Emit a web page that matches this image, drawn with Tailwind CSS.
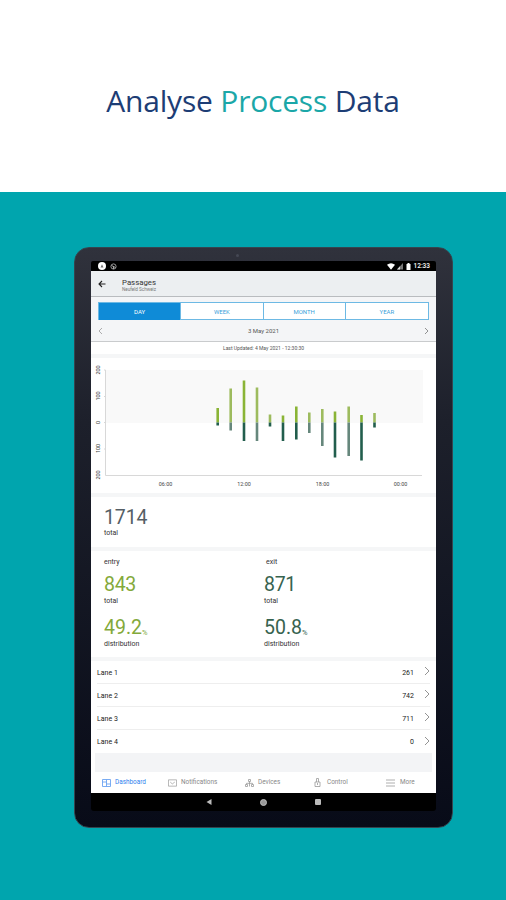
<!DOCTYPE html>
<html lang="en">
    <head>
        <meta charset="UTF-8" />
        <meta name="viewport" content="width=device-width, initial-scale=1.0" />
        <title>Analyse Process Data</title>
        <script src="https://cdn.jsdelivr.net/npm/@tailwindcss/browser@4"></script>
    </head>
    <body class="font-['Roboto',sans-serif]">
        <div class="w-[506px] h-[900px] overflow-hidden flex flex-col bg-white">
            <div class="h-[192px] shrink-0 pt-[80px] text-center">
                <h1
                    class="font-['Open_Sans',sans-serif] text-[30px] leading-[42px] tracking-[-0.2px] whitespace-nowrap text-[#1d3d75]"
                >
                    Analyse <span class="text-[#1ba7a8]">Process</span> Data
                </h1>
            </div>

            <div class="flex-1 bg-[#00a5ae] pt-[55px] pl-[74px]">
                <!-- Tablet -->
                <div
                    class="w-[379px] h-[581px] rounded-[15px] border border-[#35454f] bg-linear-to-b from-[#30323c] via-[#1d202b] via-30% to-[#080b18] px-[16px] pt-[3px]"
                >
                    <div class="flex justify-center h-[10px] pt-[3px] pr-[53px]">
                        <div class="w-[3px] h-[3px] rounded-full bg-[#454854]"></div>
                    </div>

                    <!-- Status bar -->
                    <div
                        class="h-[10px] bg-black rounded-t-[2px] flex items-center justify-between pl-[7px] pr-[6px]"
                    >
                        <div class="flex items-center gap-[4px]">
                            <svg width="8" height="8" viewBox="0 0 8 8">
                                <circle cx="4" cy="4" r="4" fill="#fff" />
                                <path d="M4 2.3 5.5 5.4H2.5Z" fill="#777" />
                            </svg>
                            <svg width="7" height="7" viewBox="0 0 7 7">
                                <circle cx="3.5" cy="3.5" r="2.6" fill="none" stroke="#999" />
                                <path d="M1.5 2.5 5.5 4.5M3.5 3.5V6" stroke="#aaa" />
                            </svg>
                        </div>
                        <div class="flex items-center gap-[2px]">
                            <svg width="8" height="7" viewBox="0 0 8 7">
                                <path d="M0 1.8Q4-1.2 8 1.8L4 6.8Z" fill="#fff" />
                            </svg>
                            <svg width="6" height="7" viewBox="0 0 6 7">
                                <path d="M6 0V6.5H0Z" fill="#777" />
                                <path d="M3 3.3V6.5H0Z" fill="#ddd" />
                            </svg>
                            <svg class="ml-[1px]" width="5" height="7" viewBox="0 0 5 7">
                                <path d="M0.5 1H1.5V0H3.5V1H4.5V7H0.5Z" fill="#fff" />
                            </svg>
                            <span class="text-[6.5px] font-medium leading-none text-white ml-[1px]">12:33</span>
                        </div>
                    </div>

                    <!-- App screen -->
                    <div class="h-[522px] bg-white flex flex-col overflow-hidden">
                        <div
                            class="h-[26px] shrink-0 bg-[#eceff1] border-b border-[#b9bcbf] flex pl-[7px]"
                        >
                            <svg class="mt-[9px]" width="8" height="8" viewBox="0 0 8 8">
                                <path
                                    d="M7.5 4H1M4 1 1 4 4 7"
                                    fill="none"
                                    stroke="#222"
                                    stroke-width="1.1"
                                />
                            </svg>
                            <div class="ml-[16px] pt-[7px]">
                                <p class="text-[7.8px] leading-[9px] text-[#333]">Passages</p>
                                <p class="text-[4.6px] leading-[6px] text-[#777]">Neufeld Schweiz</p>
                            </div>
                        </div>

                        <div class="h-[45px] shrink-0 bg-[#f4f5f7] border-b border-[#c9cbcd] pt-[5px] px-[7px]">
                            <div
                                class="h-[18px] grid grid-cols-4 border border-[#6db9e4] bg-white text-[6px] leading-[17px] text-center text-[#3b9fda] divide-x divide-[#6db9e4]"
                            >
                                <div class="bg-[#0f8bd7] text-white">DAY</div>
                                <div>WEEK</div>
                                <div>MONTH</div>
                                <div>YEAR</div>
                            </div>
                            <div class="h-[21px] flex items-center justify-between text-[6px] text-[#555]">
                                <svg width="5" height="8" viewBox="0 0 5 8">
                                    <path d="M4 1 1 4 4 7" fill="none" stroke="#999" stroke-width="0.8" />
                                </svg>
                                <span>3 May 2021</span>
                                <svg width="5" height="8" viewBox="0 0 5 8">
                                    <path d="M1 1 4 4 1 7" fill="none" stroke="#777" stroke-width="0.8" />
                                </svg>
                            </div>
                        </div>
                        <div class="h-[12px] shrink-0 text-center text-[5px] leading-[12px] text-[#555]">
                            Last Updated: 4 May 2021 - 12:30:30
                        </div>
                        <div class="h-[4px] shrink-0 bg-[#f5f6f7]"></div>

                        <!-- Passages chart -->
                        <svg
                            class="shrink-0"
                            width="345"
                            height="135"
                            viewBox="91 358 345 135"
                            font-family="Roboto, sans-serif"
                            font-size="5.4"
                            fill="#444"
                        >
                            <rect x="106" y="370" width="317" height="53" fill="#f9f9f9" />
                            <path
                                d="M104 370H105.5V475.5H422M104 396.5H105.5M104 422.5H105.5M104 449H105.5"
                                fill="none"
                                stroke="#d8d8d8"
                            />
                            <g text-anchor="middle">
                                <text transform="translate(99.5 370) rotate(-90)">200</text>
                                <text transform="translate(99.5 396) rotate(-90)">100</text>
                                <text transform="translate(99.5 422.5) rotate(-90)">0</text>
                                <text transform="translate(99.5 448.5) rotate(-90)">100</text>
                                <text transform="translate(99.5 475) rotate(-90)">200</text>
                                <text x="165.5" y="486">06:00</text>
                                <text x="244" y="486">12:00</text>
                                <text x="322.5" y="486">18:00</text>
                                <text x="400.5" y="486">00:00</text>
                            </g>
                            <g stroke-width="2.6" fill="none">
                                <path
                                    d="M217.7 408V422.5M244 380.5V422.5M283 415.5V422.5M296.3 406.5V422.5M335 411.5V422.5M361.5 415V422.5"
                                    stroke="#8ab436"
                                />
                                <path
                                    d="M230.7 388.5V422.5M257 387.5V422.5M270 414.5V422.5M309.3 412.5V422.5M322.3 409V422.5M348.7 406.5V422.5M374.5 413V422.5"
                                    stroke="#9dbb5e"
                                />
                                <path
                                    d="M217.7 422.5V425.5M244 422.5V441M270 422.5V426.5M283 422.5V441M296.3 422.5V439.5M335 422.5V457.5M361.5 422.5V460.5M374.5 422.5V427.5"
                                    stroke="#225e4d"
                                />
                                <path
                                    d="M230.7 422.5V430.5M257 422.5V441M309.3 422.5V433M322.3 422.5V446M348.7 422.5V456"
                                    stroke="#66877c"
                                />
                            </g>
                        </svg>
                        <div class="h-[4px] shrink-0 bg-[#f5f6f7]"></div>

                        <div class="h-[50px] shrink-0 pl-[13px] pt-[9px]">
                            <p class="text-[19.5px] leading-[23px] tracking-[-0.1px] text-[#555e65]">1714</p>
                            <p class="text-[7px] leading-[8px] text-[#333]">total</p>
                        </div>
                        <div class="h-[4px] shrink-0 bg-[#f5f6f7]"></div>

                        <div class="h-[106px] shrink-0 grid grid-cols-[160px_1fr] pl-[13px] pt-[7px] text-[7px] leading-[8px] text-[#333]">
                            <div>
                                <p>entry</p>
                                <p class="mt-[7px] text-[19.5px] leading-[23px] tracking-[-0.3px] text-[#83a93a]">843</p>
                                <p class="mt-[1px]">total</p>
                                <p class="h-[23px] mt-[11px] text-[19.5px] leading-[23px] text-[#83a93a] whitespace-nowrap">49.2<span class="text-[7.5px] leading-none relative top-[1px]">%</span></p>
                                <p class="mt-[1px]">distribution</p>
                            </div>
                            <div>
                                <p class="pl-[2px]">exit</p>
                                <p class="mt-[7px] text-[19.5px] leading-[23px] tracking-[-0.3px] text-[#37634f]">871</p>
                                <p class="mt-[1px]">total</p>
                                <p class="h-[23px] mt-[11px] text-[19.5px] leading-[23px] text-[#37634f] whitespace-nowrap">50.8<span class="text-[7.5px] leading-none relative top-[1px]">%</span></p>
                                <p class="mt-[1px]">distribution</p>
                            </div>
                        </div>
                        <div class="h-[4px] shrink-0 bg-[#f5f6f7]"></div>

                        <!-- Lanes -->
                        <div class="h-[92px] shrink-0 grid grid-rows-4 pl-[6px] pr-[6px] divide-y divide-[#eeeeee] text-[7px] text-[#222]">
                            <div class="flex items-center">
                                <span class="flex-1 pt-[2px]">Lane 1</span><span class="pt-[2px]">261</span>
                                <svg class="ml-[10px] mb-[2px]" width="6" height="10" viewBox="0 0 6 10">
                                    <path d="M1 1 5 5 1 9" fill="none" stroke="#888" stroke-width="0.9" />
                                </svg>
                            </div>
                            <div class="flex items-center">
                                <span class="flex-1 pt-[2px]">Lane 2</span><span class="pt-[2px]">742</span>
                                <svg class="ml-[10px] mb-[2px]" width="6" height="10" viewBox="0 0 6 10">
                                    <path d="M1 1 5 5 1 9" fill="none" stroke="#888" stroke-width="0.9" />
                                </svg>
                            </div>
                            <div class="flex items-center">
                                <span class="flex-1 pt-[2px]">Lane 3</span><span class="pt-[2px]">711</span>
                                <svg class="ml-[10px] mb-[2px]" width="6" height="10" viewBox="0 0 6 10">
                                    <path d="M1 1 5 5 1 9" fill="none" stroke="#888" stroke-width="0.9" />
                                </svg>
                            </div>
                            <div class="flex items-center">
                                <span class="flex-1 pt-[2px]">Lane 4</span><span class="pt-[2px]">0</span>
                                <svg class="ml-[10px] mb-[2px]" width="6" height="10" viewBox="0 0 6 10">
                                    <path d="M1 1 5 5 1 9" fill="none" stroke="#888" stroke-width="0.9" />
                                </svg>
                            </div>
                        </div>
                        <div class="h-[19px] shrink-0 mx-[4px] bg-[#f3f4f6]"></div>

                        <!-- Bottom tabs -->
                        <div class="flex-1 grid grid-cols-[66px_77px_69px_72px_1fr] items-center pl-[11px] text-[6.4px] leading-none text-[#888]">
                            <div class="flex items-center gap-[4px] text-[#2f7fee]">
                                <svg width="9" height="8" viewBox="0 0 9 8" fill="none" stroke="#6ba3f2" stroke-width="0.9">
                                    <path d="M0.5 0.5H8.5V7.5H0.5ZM4.5 0.5V7.5M0.5 3H4.5M4.5 5H8.5" />
                                </svg>
                                Dashboard
                            </div>
                            <div class="flex items-center gap-[4px]">
                                <svg width="9" height="8" viewBox="0 0 10 8" fill="none" stroke="#999" stroke-width="0.8">
                                    <path d="M0.5 0.5H9.5V7.5H0.5ZM2.5 3 4.8 5 7.5 3" />
                                </svg>
                                Notifications
                            </div>
                            <div class="flex items-center gap-[4px]">
                                <svg width="9" height="8" viewBox="0 0 9 8" fill="none" stroke="#999" stroke-width="0.8">
                                    <path d="M3.5 0.5H5.5V2.5H3.5ZM4.5 2.5V7.5M1.5 5.5V4.3H7.5V5.5M0.5 5.5H2.5V7.5H0.5ZM6.5 5.5H8.5V7.5H6.5Z" />
                                </svg>
                                Devices
                            </div>
                            <div class="flex items-center gap-[6px]">
                                <svg width="7" height="9" viewBox="0 0 7 9" fill="none" stroke="#999" stroke-width="0.8">
                                    <path d="M2.5 4V0.5H4.5V4M1 4H6V8.5H1ZM3.5 5V7" />
                                </svg>
                                Control
                            </div>
                            <div class="flex items-center gap-[5px]">
                                <svg width="9" height="8" viewBox="0 0 9 8" fill="none" stroke="#999" stroke-width="0.8">
                                    <path d="M0 1H9M0 4H9M0 7H9" />
                                </svg>
                                More
                            </div>
                        </div>
                    </div>

                    <!-- Android navigation -->
                    <div class="h-[18px] bg-black rounded-b-[3px] flex justify-center items-center gap-[48px]">
                        <svg width="6" height="6" viewBox="0 0 6 6"><path d="M5.5 0V6L0.5 3Z" fill="#bbb" /></svg>
                        <svg width="7" height="7" viewBox="0 0 7 7"><circle cx="3.5" cy="3.5" r="3" fill="#999" stroke="#bbb" /></svg>
                        <svg width="6" height="6" viewBox="0 0 6 6"><rect width="6" height="6" rx="1" fill="#bbb" /></svg>
                    </div>
                </div>
            </div>
        </div>
    </body>
</html>
